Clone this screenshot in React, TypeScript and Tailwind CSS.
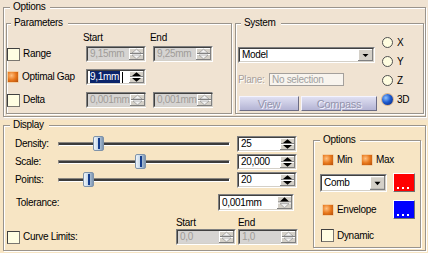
import React from 'react'

type Kids = { children?: React.ReactNode }

function Group({ label, legend, className, children }: Kids & { label: string; legend: string; className: string }) {
  return (
    <div className={`relative border border-[#9a948c] shadow-[inset_1px_1px_0_#fff,1px_1px_0_#fff] ${className}`}>
      <span className={`absolute -top-[7px] pl-[3px] pr-[5px] leading-[12px] ${legend}`}>{label}</span>
      {children}
    </div>
  )
}

function Check({ on }: { on?: boolean }) {
  if (on) {
    return (
      <div className="size-[12px] shrink-0 rounded-[1px] border border-[#f2cfa4] bg-[radial-gradient(circle_at_35%_35%,#ffc080_0%,#e8781c_50%,#b24c08_100%)]" />
    )
  }
  return <div className="size-[13px] shrink-0 border border-t-[#404040] border-l-[#404040] border-b-[#7a7670] border-r-[#7a7670] bg-[#fffde2]" />
}

function Radio({ on, label }: { on?: boolean; label: string }) {
  return (
    <div className="flex h-[11px] items-center gap-[4px]">
      {on ? (
        <div className="size-[11px] rounded-full bg-[radial-gradient(circle_at_35%_35%,#8cc0ff_0%,#1e5cd0_45%,#061c70_100%)] shadow-[0_0_0_1px_#d8b48c]" />
      ) : (
        <div className="size-[11px] rounded-full border border-[#505050] bg-[#fffde0]" />
      )}
      <span>{label}</span>
    </div>
  )
}

function SpinBtn({ disabled, downOff }: { disabled?: boolean; downOff?: boolean }) {
  const upFill = disabled ? '#f2f2f2' : '#000'
  const dnFill = disabled || downOff ? '#f2f2f2' : '#000'
  return (
    <svg width="15" viewBox="0 0 15 12" preserveAspectRatio="none" className="block h-full shrink-0">
      <rect width="15" height="12" fill="#d4d0c8" />
      <path d="M0 0.5H15M0.5 0V12" stroke="#fff" />
      <path d="M0 11.5H15M14.5 0V12" stroke="#808080" />
      <path d="M1 5.5H14" stroke="#808080" />
      <path d="M1 6.5H14" stroke="#fff" />
      <polygon points="3,5 12,5 7.5,1.2" fill={upFill} stroke={disabled ? '#8a8a8a' : 'none'} strokeWidth="0.6" />
      <polygon points="3,7 12,7 7.5,10.8" fill={dnFill} stroke={disabled || downOff ? '#8a8a8a' : 'none'} strokeWidth="0.6" />
    </svg>
  )
}

function Spin({ value, className, disabled, selected, downOff }: { value: string; className: string; disabled?: boolean; selected?: boolean; downOff?: boolean }) {
  return (
    <div className={`flex shrink-0 border border-t-[#808080] border-l-[#808080] border-b-white border-r-white ${className}`}>
      <div
        className={`flex flex-1 items-center border border-t-[#404040] border-l-[#404040] border-b-[#d4d0c8] border-r-[#d4d0c8] ${
          disabled ? 'bg-[#d6d4d2] text-[#a09c98]' : 'bg-white text-black'
        }`}
      >
        <div className="flex flex-1 items-center pl-[2px]">
          {selected ? (
            <>
              <span className="bg-[#0a246a] pr-[1px] text-white">{value}</span>
              <span className="ml-[2px] h-[11px] w-[1px] bg-black" />
            </>
          ) : (
            <span>{value}</span>
          )}
        </div>
        <SpinBtn disabled={disabled} downOff={downOff} />
      </div>
    </div>
  )
}

function Combo({ value, className }: { value: string; className: string }) {
  return (
    <div className={`flex shrink-0 border border-t-[#808080] border-l-[#808080] border-b-white border-r-white ${className}`}>
      <div className="flex flex-1 items-center border border-t-[#404040] border-l-[#404040] border-b-[#d4d0c8] border-r-[#d4d0c8] bg-white">
        <span className="flex-1 pl-[2px]">{value}</span>
        <svg width="15" viewBox="0 0 15 12" preserveAspectRatio="none" className="block h-full shrink-0">
          <rect width="15" height="12" fill="#d4d0c8" />
          <path d="M0 0.5H15M0.5 0V12" stroke="#fff" />
          <path d="M0 11.5H15M14.5 0V12" stroke="#808080" />
          <polygon points="4.5,5 10.5,5 7.5,8" fill="#000" />
        </svg>
      </div>
    </div>
  )
}

function Btn({ children, className }: Kids & { className: string }) {
  return (
    <div
      className={`flex h-[15px] items-center justify-center border border-t-[#f4f4ff] border-l-[#f4f4ff] border-b-[#6c6c84] border-r-[#6c6c84] bg-gradient-to-b from-[#e0e0f2] to-[#b4b4d4] text-[11px] text-[#9494ac] [text-shadow:1px_1px_0_#f4f4ff] ${className}`}
    >
      {children}
    </div>
  )
}

function ColorBtn({ className, blue }: { className?: string; blue?: boolean }) {
  return (
    <div
      className={`relative h-[19px] w-[22px] shrink-0 border border-t-white border-l-white border-b-[#707070] border-r-[#707070] ${
        blue ? 'bg-[#0000ff]' : 'bg-[#ff0000]'
      } ${className ?? ''}`}
    >
      <div className="absolute bottom-[2px] left-[3px] flex gap-[3px]">
        <span className="size-[2px] bg-white" />
        <span className="size-[2px] bg-white" />
        <span className="size-[2px] bg-white" />
      </div>
    </div>
  )
}

function Slider({ pos }: { pos: number }) {
  return (
    <div className="relative h-[16px] w-[172px]">
      <div className="absolute left-0 right-0 top-[6px] h-[4px] border border-t-[#8a8680] border-l-[#8a8680] border-b-white border-r-white bg-[#3c3c3c]" />
      <div
        className="absolute top-0 h-[15px] w-[11px] rounded-[2px] border border-[#7f93aa] bg-gradient-to-r from-[#eef4fa] via-[#c2d4e6] to-[#7c94b0]"
        style={{ left: pos }}
      >
        <div className="absolute bottom-[1px] left-[4px] top-[1px] w-[2px] bg-[#143c8c]" />
      </div>
    </div>
  )
}

function SliderRow({ label, pos, value, className }: { label: string; pos: number; value: string; className?: string }) {
  return (
    <div className={`flex h-[16px] items-center ${className ?? ''}`}>
      <span className="w-[54px] pl-[11px]">{label}</span>
      <Slider pos={pos} />
      <Spin value={value} className="ml-[7px] h-[16px] w-[60px]" />
    </div>
  )
}

function ParamRow({ on, label, className, children }: Kids & { on?: boolean; label: string; className: string }) {
  return (
    <div className={`flex h-[16px] items-center ${className}`}>
      <div className="flex w-[79px] items-center gap-[3px]">
        <Check on={on} />
        <span>{label}</span>
      </div>
      {children}
    </div>
  )
}

export default function App() {
  return (
    <div className="h-[253px] w-[428px] overflow-hidden font-['Liberation_Sans',Arial,sans-serif] text-[10px] leading-[12px] tracking-[-0.3px] text-black">
      <div className="h-[120px] bg-[#f0e3d2] pl-[3px] pt-[7px]">
        <Group label="Options" legend="left-[6px] bg-[#f0e3d2]" className="h-[110px] w-[423px]">
          <div className="flex pl-[2px] pt-[15px]">
            <Group label="Parameters" legend="left-[4px] bg-[#f0e3d2]" className="h-[91px] w-[226px]">
              <div className="pt-[8px]">
                <div className="flex h-[12px]">
                  <div className="w-[76px]" />
                  <div className="w-[67px]">Start</div>
                  <div>End</div>
                </div>
                <ParamRow label="Range" className="mt-[2px]">
                  <Spin disabled value="9,15mm" className="h-[16px] w-[60px]" />
                  <Spin disabled value="9,25mm" className="ml-[7px] h-[16px] w-[60px]" />
                </ParamRow>
                <ParamRow on label="Optimal Gap" className="mt-[7px]">
                  <Spin selected value="9,1mm" className="h-[16px] w-[60px]" />
                </ParamRow>
                <ParamRow label="Delta" className="mt-[7px]">
                  <Spin disabled value="0,001mm" className="h-[16px] w-[60px]" />
                  <Spin disabled value="0,001mm" className="ml-[7px] h-[16px] w-[60px]" />
                </ParamRow>
              </div>
            </Group>
            <Group label="System" legend="left-[5px] bg-[#f0e3d2]" className="ml-[3px] h-[91px] w-[189px]">
              <div className="flex">
                <div className="w-[144px] pl-[2px] pt-[23px]">
                  <Combo value="Model" className="h-[16px] w-[137px]" />
                  <div className="mt-[10px] flex h-[13px] items-center">
                    <span className="w-[31px] text-[#a8a09a] [text-shadow:1px_1px_0_#fff]">Plane:</span>
                    <div className="flex h-[13px] w-[75px] items-center border border-[#a4a09c] bg-[#f8f4ee] pl-[2px] text-[#a0a0a0]">
                      No selection
                    </div>
                  </div>
                  <div className="mt-[10px] flex">
                    <Btn className="ml-[1px] w-[60px]">View</Btn>
                    <Btn className="ml-[2px] w-[76px]">Compass</Btn>
                  </div>
                </div>
                <div className="flex flex-col gap-[8px] pl-[2px] pt-[13px]">
                  <Radio label="X" />
                  <Radio label="Y" />
                  <Radio label="Z" />
                  <Radio on label="3D" />
                </div>
              </div>
            </Group>
          </div>
        </Group>
      </div>
      <div className="h-[133px] bg-[#f7e5c4] pl-[3px] pt-[5px]">
        <Group label="Display" legend="left-[6px] bg-[#f7e5c4]" className="h-[126px] w-[423px]">
          <div className="flex">
            <div className="w-[309px] pt-[10px]">
              <SliderRow label="Density:" pos={35} value="25" />
              <SliderRow label="Scale:" pos={77} value="20,000" className="mt-[2px]" />
              <SliderRow label="Points:" pos={25} value="20" className="mt-[2px]" />
              <div className="mt-[6px] flex h-[17px] items-center">
                <span className="w-[214px] pl-[12px]">Tolerance:</span>
                <Spin value="0,001mm" downOff className="h-[17px] w-[76px]" />
              </div>
              <div className="mt-[6px] flex items-end">
                <div className="flex h-[16px] w-[172px] items-center gap-[3px] pl-[3px]">
                  <Check />
                  <span>Curve Limits:</span>
                </div>
                <div className="w-[60px]">
                  <div className="h-[12px]">Start</div>
                  <Spin disabled value="0,0" className="h-[16px] w-[60px]" />
                </div>
                <div className="ml-[2px] w-[60px]">
                  <div className="h-[12px]">End</div>
                  <Spin disabled value="1,0" className="h-[16px] w-[60px]" />
                </div>
              </div>
            </div>
            <Group label="Options" legend="left-[6px] bg-[#f7e5c4]" className="mt-[14px] h-[108px] w-[108px]">
              <div className="pt-[13px]">
                <div className="flex h-[12px] items-center">
                  <div className="flex w-[47px] items-center gap-[3px] pl-[8px]">
                    <Check on />
                    <span>Min</span>
                  </div>
                  <div className="flex items-center gap-[3px]">
                    <Check on />
                    <span>Max</span>
                  </div>
                </div>
                <div className="mt-[7px] flex h-[19px] items-center pl-[6px]">
                  <Combo value="Comb" className="h-[18px] w-[67px]" />
                  <ColorBtn className="ml-[6px]" />
                </div>
                <div className="mt-[8px] flex h-[19px] items-center">
                  <div className="flex w-[79px] items-center gap-[3px] pl-[8px]">
                    <Check on />
                    <span>Envelope</span>
                  </div>
                  <ColorBtn blue />
                </div>
                <div className="mt-[10px] flex h-[13px] items-center gap-[3px] pl-[7px]">
                  <Check />
                  <span>Dynamic</span>
                </div>
              </div>
            </Group>
          </div>
        </Group>
      </div>
    </div>
  )
}
